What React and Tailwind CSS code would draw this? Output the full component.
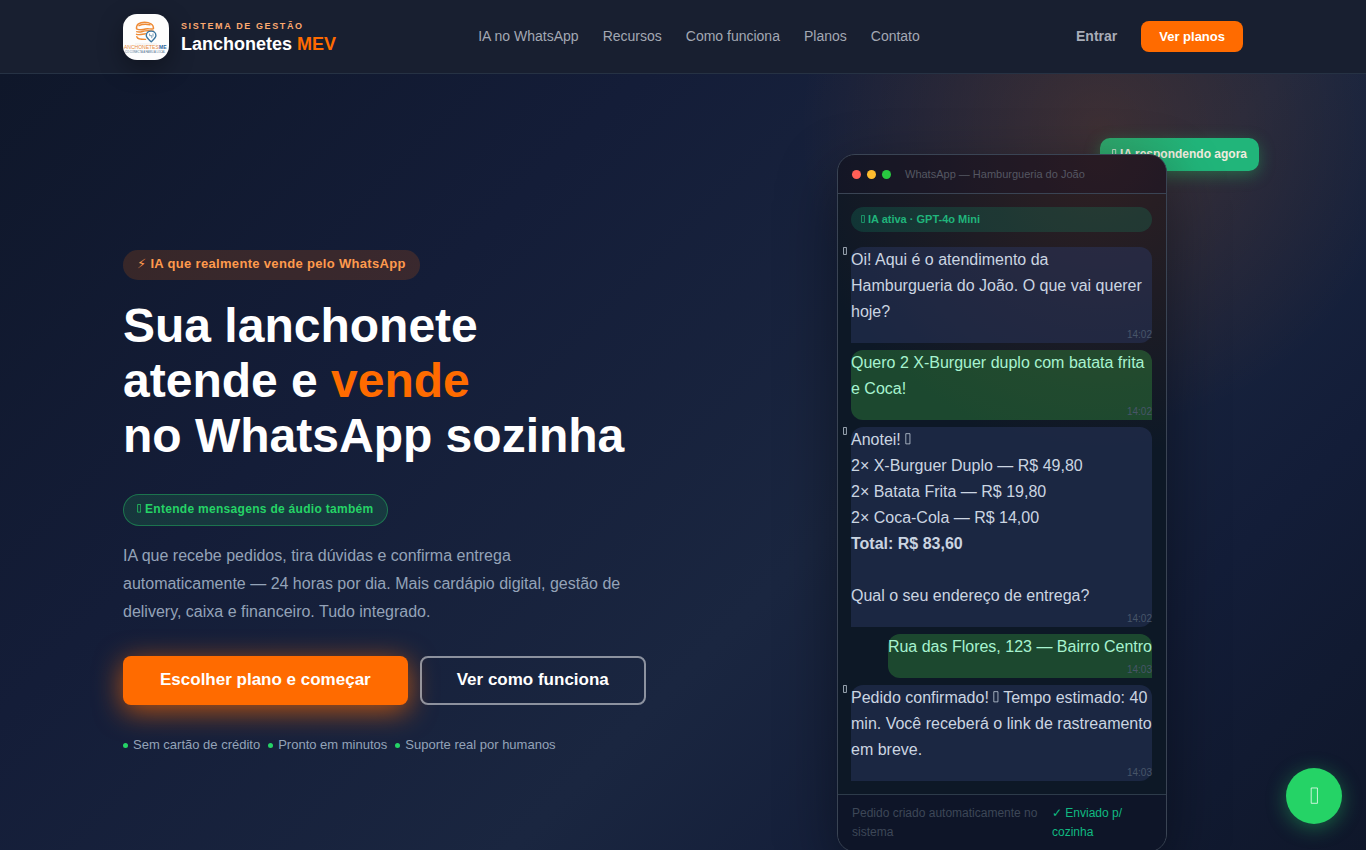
const brandMark = (
  <svg viewBox="0 0 46 46" className="size-full" aria-hidden="true">
    <rect width="46" height="46" fill="#fdfdfd" />
    <g fill="none" stroke="#ee8a35" strokeWidth="1.4" strokeLinecap="round" strokeLinejoin="round">
      <path d="M13.500 14.800C13 10.500 16.500 8.200 21.500 8.200s9.200 2 9 6.400c-2.500 1.300-5-.6-8 .4s-6 1.300-9-.2Z" />
      <path d="M16 11.700c2.500-1.300 7-1.700 11-.9" />
      <path d="M13.700 17.700c3 1.200 5.500-.4 8.500-.8s5.500-.2 8.300.4" />
      <path d="M13.500 20.300c3.500 1.100 5.500-.2 9-.6" />
      <path d="M13.800 22.700c.7 2.300 2.700 2.700 8.700 2.700" />
    </g>
    <path
      d="M28.200 27.800c-2.600-2.400-4.900-4.300-4.900-6.400a4.800 4.300 0 0 1 9.600 0c0 2.100-2.100 3.900-4.700 6.400Z"
      fill="#fff"
      stroke="#39749f"
      strokeWidth="1.400"
    />
    <path d="M26.600 19.500v2.200h2.200v2.500M30 19.500v3" fill="none" stroke="#6b93b0" strokeWidth="0.900" />
    <path d="M12 30h22" stroke="#e6e6e6" strokeWidth="0.600" />
    <text x="1" y="35.400" fontFamily="Liberation Sans" fontSize="5" fill="#e8893a">ANCHONETES</text>
    <text x="36" y="35.400" fontFamily="Liberation Sans" fontSize="5" fontWeight="700" fill="#28659a">ME</text>
    <text x="2" y="38.600" fontFamily="Liberation Sans" fontSize="2.700" fill="#4b6f8d">CO CONECTA A FAMILIA LOCAL</text>
  </svg>
);

const navLinks = ["IA no WhatsApp", "Recursos", "Como funciona", "Planos", "Contato"];
const perks = ["Sem cartão de crédito", "Pronto em minutos", "Suporte real por humanos"];

// Narrow outlined box that scales with the surrounding text
function Box() {
  return (
    <svg viewBox="0 0 36 72" className="inline h-[0.72em] w-[0.36em] align-baseline" aria-hidden="true">
      <rect
        x="5"
        y="4"
        width="26"
        height="64"
        fill="none"
        stroke="currentColor"
        strokeOpacity="0.75"
        strokeWidth="1"
        vectorEffect="non-scaling-stroke"
      />
    </svg>
  );
}

function Message({ mine, time, children }) {
  return (
    <div className={mine ? "flex justify-end" : "relative"}>
      {!mine && (
        <span className="absolute -left-2 -top-1 text-[11px] leading-4 text-[#cbd5e1]">
          <Box />
        </span>
      )}
      <div
        className={
          mine
            ? "rounded-xl rounded-br-none bg-[#3fba47]/30 text-[#a7f3d0]"
            : "rounded-xl rounded-bl-none bg-[#2d3a66]/45 text-[#cbd5e1]"
        }
      >
        <div className="text-base leading-[26px]">{children}</div>
        <div className="pt-[2px] text-right text-[10px] leading-4 text-[#475569]">{time}</div>
      </div>
    </div>
  );
}

export default function App() {
  return (
    <div className="h-screen overflow-hidden bg-[#0f172a] font-['Liberation_Sans',Arial,sans-serif]">
      <header className="relative z-10 border-b border-[#263244] bg-[#181f30]">
        <div className="mx-auto flex h-[73px] max-w-[1120px] items-center justify-between">
          <a href="#inicio" className="flex items-center gap-3">
            <span className="size-[46px] overflow-hidden rounded-[14px] shadow-[0_8px_24px_rgba(0,0,0,0.35)]">{brandMark}</span>
            <span className="flex flex-col gap-[2px]">
              <span className="text-[9px] font-bold leading-3 tracking-[0.18em] text-[#fdaa70]">SISTEMA DE GESTÃO</span>
              <span className="text-lg font-bold leading-5 text-white">
                Lanchonetes <span className="text-[#ff6b00]">MEV</span>
              </span>
            </span>
          </a>
          <nav className="mr-[14px] flex gap-6 pb-[2px] text-sm text-[#a3a8b3]">
            {navLinks.map((label) => (
              <a key={label} href="#secao">{label}</a>
            ))}
          </nav>
          <div className="flex items-center gap-6">
            <a href="#entrar" className="pb-[2px] text-sm font-bold text-[#a8adb8]">Entrar</a>
            <a href="#planos" className="rounded-lg bg-[#ff6b00] px-[18px] py-[6px] text-[13px] font-bold leading-[19px] text-white">
              Ver planos
            </a>
          </div>
        </div>
      </header>

      <main className="bg-[radial-gradient(circle_at_80.5%_7%,rgba(255,107,0,0.16),transparent_300px),linear-gradient(135deg,#0f172a_0%,#141d38_30%,#1a2640_60%,#131d38_80%,#0f172a_100%)]">
        <div className="mx-auto grid max-w-[1120px] grid-cols-[1fr_406px] pt-20">
          <section className="pt-24">
            <p className="w-fit rounded-full bg-[#ff6b00]/16 px-[14px] pb-[6px] pt-1 text-[13px] font-bold leading-5 tracking-wide text-[#ff9a4d]">
              <span className="font-['DejaVu_Sans'] [font-variant-emoji:text]">⚡</span> IA que realmente vende pelo WhatsApp
            </p>
            <h1 className="mt-[18px] text-5xl font-bold leading-[55px] text-white">
              Sua lanchonete
              <br />
              atende e <span className="text-[#ff6b00]">vende</span>
              <br />
              no WhatsApp sozinha
            </h1>
            <p className="mt-[31px] w-fit rounded-full border border-[#25d366]/40 bg-[#25d366]/15 px-[13px] pb-[6px] pt-1 text-xs font-bold leading-5 tracking-wide text-[#25d366]">
              <Box /> Entende mensagens de áudio também
            </p>
            <p className="mt-4 max-w-[510px] text-base leading-7 text-[#94a3b8]">
              IA que recebe pedidos, tira dúvidas e confirma entrega automaticamente — 24 horas por dia. Mais cardápio
              digital, gestão de delivery, caixa e financeiro. Tudo integrado.
            </p>
            <div className="mt-[30px] flex gap-3 text-[17px] font-bold leading-5 text-white">
              <a href="#planos" className="rounded-lg bg-[#ff6b00] px-[37px] pb-[15px] pt-[14px] shadow-[0_6px_28px_rgba(255,107,0,0.7)]">
                Escolher plano e começar
              </a>
              <a href="#como" className="rounded-lg border-2 border-white/50 px-[35px] pb-[13px] pt-3">
                Ver como funciona
              </a>
            </div>
            <ul className="mt-[30px] flex gap-2 text-[13px] leading-5 text-[#94a3b8]">
              {perks.map((perk) => (
                <li key={perk} className="flex items-center gap-[5px]">
                  <span className="size-[5px] rounded-full bg-[#25d366]" />
                  {perk}
                </li>
              ))}
            </ul>
          </section>

          <section className="relative w-[330px]">
            <div className="absolute -right-[92px] -top-4 rounded-[10px] bg-[linear-gradient(90deg,#2fa76c,#21b57a_60%)] px-3 py-[6px] text-xs font-bold leading-[21px] text-[#f0ecdf] shadow-[0_4px_16px_rgba(37,211,102,0.35)]">
              <Box /> IA respondendo agora
            </div>
            <div className="relative overflow-hidden rounded-[18px] border border-[#3a4454] bg-[#0d1826] bg-[radial-gradient(circle_at_80%_0,rgba(66,36,32,0.65),transparent_300px)] shadow-[0_20px_60px_rgba(0,0,0,0.4)]">
              <div className="flex h-[39px] items-center border-b border-[#3a4454] bg-[#1c1029]/30 px-[14px]">
                <span className="flex gap-[6px]">
                  <i className="size-[9px] rounded-full bg-[#ff5f57]" />
                  <i className="size-[9px] rounded-full bg-[#febc2e]" />
                  <i className="size-[9px] rounded-full bg-[#28c840]" />
                </span>
                <span className="ml-[14px] text-[11px] text-[#555762]">WhatsApp — Hamburgueria do João</span>
              </div>
              <div className="flex flex-col gap-[7px] py-[13px] pl-[13px] pr-[14px]">
                <p className="mb-2 rounded-full bg-[#10b981]/18 px-[10px] text-[11px] font-bold leading-[25px] text-[#20b57b]">
                  <Box /> IA ativa · GPT-4o Mini
                </p>
                <Message time="14:02">Oi! Aqui é o atendimento da Hamburgueria do João. O que vai querer hoje?</Message>
                <Message mine time="14:02">Quero 2 X-Burguer duplo com batata frita e Coca!</Message>
                <Message time="14:02">
                  Anotei! <Box /><br />
                  2× X-Burguer Duplo — R$ 49,80<br />
                  2× Batata Frita — R$ 19,80<br />
                  2× Coca-Cola — R$ 14,00<br />
                  <b>Total: R$ 83,60</b>
                  <br />
                  <br />
                  Qual o seu endereço de entrega?
                </Message>
                <Message mine time="14:03">Rua das Flores, 123 — Bairro Centro</Message>
                <Message time="14:03">
                  Pedido confirmado! <Box /> Tempo estimado: 40 min. Você receberá o link de rastreamento em breve.
                </Message>
              </div>
              <div className="flex justify-between gap-3 border-t border-[#2d3b4a] bg-[#0f1429]/70 px-[14px] py-[9px] text-xs leading-[19px]">
                <span className="text-[#3d4757]">Pedido criado automaticamente no sistema</span>
                <span className="w-[100px] shrink-0 text-[#10b981]">✓ Enviado p/ cozinha</span>
              </div>
            </div>
          </section>
        </div>
      </main>

      <a
        href="#whatsapp"
        aria-label="WhatsApp"
        className="fixed bottom-[26px] right-6 z-20 flex size-14 items-center justify-center rounded-full bg-[#25d366] text-2xl text-white shadow-[0_4px_20px_rgba(37,211,102,0.4)]"
      >
        <Box />
      </a>
    </div>
  );
}
